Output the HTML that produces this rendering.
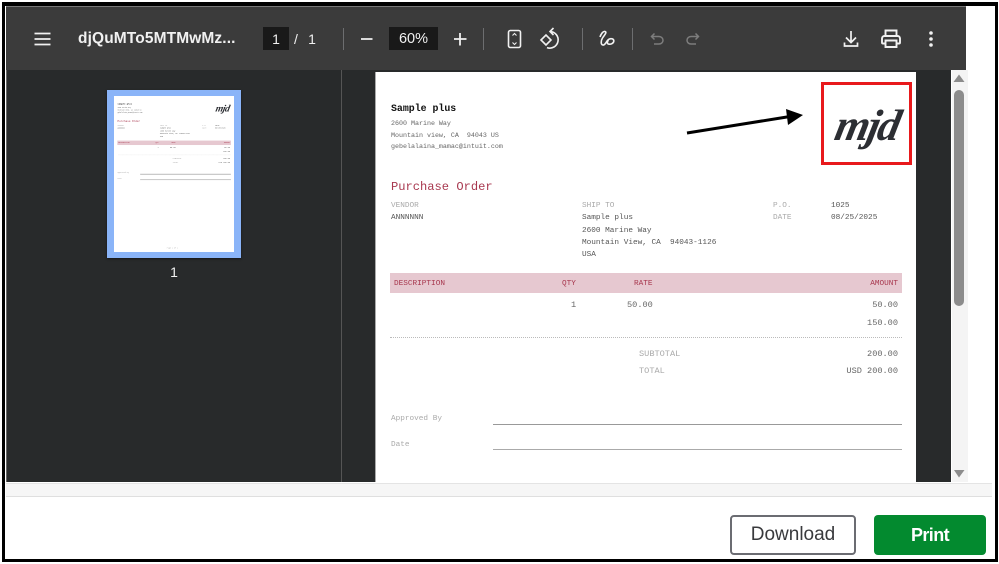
<!DOCTYPE html>
<html><head><meta charset="utf-8">
<style>
html,body{margin:0;padding:0;width:999px;height:564px;overflow:hidden;background:#fff}
*{box-sizing:border-box}
.a{position:absolute}
#root{position:relative;width:999px;height:564px;background:#fff;overflow:hidden}
.ui{font-family:"Liberation Sans",sans-serif;color:#f1f1f1;line-height:20px;text-align:center}
.sep{position:absolute;width:1px;top:28px;height:22px;background:#6d6e70}
.doc{position:absolute;width:541px;background:#fff;overflow:hidden;font-family:"Liberation Mono",monospace;color:#555}
.doc div{position:absolute;white-space:pre;line-height:10px}
.s{font-size:6.67px;color:#666;margin-top:1px}
.m{font-size:7.73px;color:#555;margin-top:1px}
.g{font-size:7.73px;color:#aaa;margin-top:1px}
.h{font-size:7.73px;color:#a8384f;margin-top:1px}
.n{font-size:8.6px;color:#666;margin-top:1px}
.t{margin-top:1px}
.r{text-align:right}
svg{position:absolute;overflow:visible}
</style></head><body>
<div id="root">
  <!-- viewer -->
  <div class="a" style="left:6px;top:6px;width:960px;height:476px;background:#282a2b"></div>
  <div class="a" style="left:6px;top:6px;width:960px;height:64px;background:#3b3b3b;border-top:1px solid #777"></div>
  <div class="a" style="left:6px;top:70px;width:1px;height:412px;background:#666"></div>
  <div class="a" style="left:341px;top:70px;width:1px;height:412px;background:#555"></div>

  <!-- toolbar -->
  <svg style="left:0;top:0" width="999" height="70" fill="none" stroke="#f1f1f1" stroke-width="1.7">
    <path d="M34.500 33.500h16M34.500 39h16M34.500 44.500h16"/>
    <path d="M361 39h11.500M454 39h12.500M460 33v12.500" stroke-width="1.8"/>
    <!-- fit -->
    <rect x="508.500" y="30.500" width="12" height="17" rx="1.800" stroke-width="1.600"/>
    <path d="M512.500 35.500l2-2 2 2M512.500 42.500l2 2 2-2" stroke-width="1.100"/>
    <!-- rotate -->
    <path d="M541 40l5-5 5 5-5 5z" stroke-width="1.600"/>
    <path d="M550 31.500a8.300 8.300 0 1 1-3 16.100M553.500 28l-3.500 3.500 3.500 3.500" stroke-width="1.600"/>
    <!-- ink -->
    <path d="M600 37c1-3 3-6 5-5.500 2.500.7-1 4-2.500 6.500-1.500 2.500-2 6.500.3 7 2.700.5 3.500-4.500 6.200-5.800 2.500-1.200 5-.2 4.800 2-.2 2.300-3.500 3.500-5.500 2.800-1.500-.6-1-2.500.2-4" stroke-width="1.600"/>
    <!-- undo redo -->
    <path d="M654.500 33.500l-3 3 3 3M652 36.500h7c2.300 0 4 1.700 4 3.800s-1.700 3.700-4 3.700h-5" stroke="#7d7d7d" stroke-width="1.500"/>
    <path d="M695.500 33.500l3 3-3 3M698 36.500h-7c-2.300 0-4 1.700-4 3.800s1.700 3.700 4 3.700h5" stroke="#7d7d7d" stroke-width="1.500"/>
    <!-- download -->
    <path d="M851 31v11.500M846 37.500l5 5 5-5M844.500 42.500v3.500h13v-3.500" stroke-width="1.700"/>
    <!-- print -->
    <path d="M885.500 36v-5.500h11V36M885.500 43.500h-2.500a1 1 0 0 1-1-1v-4a2.500 2.500 0 0 1 2.500-2.500h13a2.500 2.500 0 0 1 2.500 2.500v4a1 1 0 0 1-1 1h-2.500" stroke-width="1.900"/>
    <path d="M885.500 40.500h11v6.500h-11z" stroke-width="1.900"/>
    <g fill="#f1f1f1" stroke="none"><circle cx="931" cy="33" r="1.800"/><circle cx="931" cy="39" r="1.800"/><circle cx="931" cy="45" r="1.800"/></g>
  </svg>
  <div class="a ui" style="left:78px;top:29px;width:160px;text-align:left;font-size:15.5px;font-weight:700;white-space:nowrap;letter-spacing:.12px">djQuMTo5MTMwMz...</div>
  <div class="a" style="left:263px;top:27px;width:26px;height:23px;background:#191919"></div>
  <div class="a ui" style="left:263px;top:29px;width:26px;font-size:14px">1</div>
  <div class="a ui" style="left:286px;top:29px;width:20px;font-size:14px">/</div>
  <div class="a ui" style="left:302px;top:29px;width:20px;font-size:14px">1</div>
  <div class="sep" style="left:343px"></div>
  <div class="a" style="left:389px;top:27px;width:49px;height:23px;background:#191919"></div>
  <div class="a ui" style="left:389px;top:29px;width:49px;font-size:14.5px">60%</div>
  <div class="sep" style="left:483px"></div>
  <div class="sep" style="left:582px"></div>
  <div class="sep" style="left:632px"></div>

  <!-- thumbnail -->
  <div class="a" style="left:107px;top:90px;width:134px;height:168px;background:#8ab4f8;box-shadow:0 1px 2px rgba(0,0,0,.5)"></div>
  <div class="a" style="left:114px;top:96px;width:120px;height:156px;overflow:hidden;background:#fff">
    <div style="position:absolute;left:0;top:0;width:541px;height:703px;transform:scale(.2218);transform-origin:0 0;filter:blur(.8px)">
      <div class="doc" style="left:0;top:0;height:703px">
        <div class="t" style="left:16px;top:31px;font-size:9.9px;font-weight:700;color:#111">Sample plus</div>
        <div class="s" style="left:16px;top:46px">2600 Marine Way</div>
        <div class="s" style="left:16px;top:58px">Mountain view, CA  94043 US</div>
        <div class="s" style="left:16px;top:69px">gebelalaina_mamac@intuit.com</div>
        <div class="t" style="left:16px;top:109px;font-size:12.1px;color:#a8384f">Purchase Order</div>
        <div class="g" style="left:16px;top:128px">VENDOR</div>
        <div class="m" style="left:16px;top:140px">ANNNNNN</div>
        <div class="g" style="left:207px;top:128px">SHIP TO</div>
        <div class="m" style="left:207px;top:140px">Sample plus</div>
        <div class="m" style="left:207px;top:153px">2600 Marine Way</div>
        <div class="m" style="left:207px;top:165px">Mountain View, CA  94043-1126</div>
        <div class="m" style="left:207px;top:177px">USA</div>
        <div class="g" style="left:398px;top:128px">P.O.</div>
        <div class="m" style="left:456px;top:128px">1025</div>
        <div class="g" style="left:398px;top:140px">DATE</div>
        <div class="m" style="left:456px;top:140px">08/25/2025</div>
        <div style="left:15px;top:201px;width:512px;height:20px;background:#e6c8d0"></div>
        <div class="h" style="left:19px;top:206px">DESCRIPTION</div>
        <div class="h" style="left:187px;top:206px">QTY</div>
        <div class="h" style="left:259px;top:206px">RATE</div>
        <div class="h r" style="left:463px;top:206px;width:60px">AMOUNT</div>
        <div class="n" style="left:196px;top:227px">1</div>
        <div class="n" style="left:252px;top:227px">50.00</div>
        <div class="n r" style="left:463px;top:227px;width:60px">50.00</div>
        <div class="n r" style="left:463px;top:245px;width:60px">150.00</div>
        <div style="left:15px;top:265px;width:512px;height:0;border-top:1px dotted #bbb"></div>
        <div class="g" style="left:264px;top:276px;font-size:8.6px">SUBTOTAL</div>
        <div class="g" style="left:264px;top:293px;font-size:8.6px">TOTAL</div>
        <div class="n r" style="left:443px;top:276px;width:80px">200.00</div>
        <div class="n r" style="left:423px;top:293px;width:100px">USD 200.00</div>
        <div class="g" style="left:16px;top:341px">Approved By</div>
        <div class="g" style="left:16px;top:367px">Date</div>
        <div style="left:118px;top:351px;width:409px;height:3px;background:#999"></div>
        <div style="left:118px;top:376px;width:409px;height:3px;background:#aaa"></div>
        <div style="left:459px;top:33px;font-family:'Liberation Serif',serif;font-style:italic;font-weight:700;font-size:44px;line-height:44px;color:#2c2e33;letter-spacing:-2px;transform:skewX(-12deg)">mjd</div>
        <div class="g" style="left:238px;top:680px">Page 1 of 1</div>
      </div>
    </div>
  </div>
  <div class="a ui" style="left:164px;top:262px;width:20px;font-size:14px">1</div>

  <!-- main page -->
  <div class="a" style="left:375px;top:72px;width:541px;height:410px;overflow:hidden;border-left:1px solid #aaa;background:#fff">
    <div class="doc" style="left:-1px;top:0;height:410px">
      <div class="t" style="left:16px;top:31px;font-size:9.9px;font-weight:700;color:#111">Sample plus</div>
      <div class="s" style="left:16px;top:46px">2600 Marine Way</div>
      <div class="s" style="left:16px;top:58px">Mountain view, CA  94043 US</div>
      <div class="s" style="left:16px;top:69px">gebelalaina_mamac@intuit.com</div>
      <div class="t" style="left:16px;top:109px;font-size:12.1px;color:#a8384f">Purchase Order</div>
      <div class="g" style="left:16px;top:128px">VENDOR</div>
      <div class="m" style="left:16px;top:140px">ANNNNNN</div>
      <div class="g" style="left:207px;top:128px">SHIP TO</div>
      <div class="m" style="left:207px;top:140px">Sample plus</div>
      <div class="m" style="left:207px;top:153px">2600 Marine Way</div>
      <div class="m" style="left:207px;top:165px">Mountain View, CA  94043-1126</div>
      <div class="m" style="left:207px;top:177px">USA</div>
      <div class="g" style="left:398px;top:128px">P.O.</div>
      <div class="m" style="left:456px;top:128px">1025</div>
      <div class="g" style="left:398px;top:140px">DATE</div>
      <div class="m" style="left:456px;top:140px">08/25/2025</div>
      <div style="left:15px;top:201px;width:512px;height:20px;background:#e6c8d0"></div>
      <div class="h" style="left:19px;top:206px">DESCRIPTION</div>
      <div class="h" style="left:187px;top:206px">QTY</div>
      <div class="h" style="left:259px;top:206px">RATE</div>
      <div class="h r" style="left:463px;top:206px;width:60px">AMOUNT</div>
      <div class="n" style="left:196px;top:227px">1</div>
      <div class="n" style="left:252px;top:227px">50.00</div>
      <div class="n r" style="left:463px;top:227px;width:60px">50.00</div>
      <div class="n r" style="left:463px;top:245px;width:60px">150.00</div>
      <div style="left:15px;top:265px;width:512px;height:0;border-top:1px dotted #bbb"></div>
      <div class="g" style="left:264px;top:276px;font-size:8.6px">SUBTOTAL</div>
      <div class="g" style="left:264px;top:293px;font-size:8.6px">TOTAL</div>
      <div class="n r" style="left:443px;top:276px;width:80px">200.00</div>
      <div class="n r" style="left:423px;top:293px;width:100px">USD 200.00</div>
      <div class="g" style="left:16px;top:341px">Approved By</div>
      <div class="g" style="left:16px;top:367px">Date</div>
      <div style="left:118px;top:352px;width:409px;height:1px;background:#999"></div>
      <div style="left:118px;top:377px;width:409px;height:1px;background:#aaa"></div>
    </div>
  </div>

  <!-- logo -->
  <div class="a" style="left:821px;top:82px;width:91px;height:83px;border:3px solid #e8191c"></div>
  <div class="a" style="left:836px;top:104px;font-family:'Liberation Serif',serif;font-style:italic;font-weight:700;font-size:44px;line-height:44px;color:#2c2e33;letter-spacing:-2px;transform:skewX(-12deg);white-space:pre">mjd</div>

  <!-- arrow -->
  <svg style="left:0;top:0" width="999" height="564">
    <path d="M687 133L790 116.500" stroke="#000" stroke-width="3" fill="none"/>
    <path d="M786 109L803 115L788 125z" fill="#000"/>
  </svg>

  <!-- scrollbar -->
  <div class="a" style="left:951px;top:70px;width:17px;height:412px;background:#f4f4f4;border-left:1px solid #fff"></div>
  <div class="a" style="left:954px;top:90px;width:10px;height:216px;background:#8c8c8c;border-radius:5px"></div>
  <svg style="left:0;top:0" width="999" height="564">
    <path d="M959 74.500L964.500 82H953.500z" fill="#8c8c8c"/>
    <path d="M954 470H964.500L959 477.500z" fill="#8c8c8c"/>
  </svg>

  <!-- bottom strip -->
  <div class="a" style="left:6px;top:483px;width:986px;height:14px;background:#f6f6f6;border-top:1px solid #e4e4e4;border-bottom:1px solid #dfdfdf"></div>

  <!-- buttons -->
  <div class="a" style="left:730px;top:515px;width:126px;height:40px;border:2px solid #6b6c72;border-radius:4px;background:#fff;font-family:'Liberation Sans',sans-serif;font-size:19px;line-height:36px;text-align:center;color:#393a3d">Download</div>
  <div class="a" style="left:874px;top:515px;width:112px;height:40px;border-radius:4px;background:#038a2f;font-family:'Liberation Sans',sans-serif;font-weight:700;font-size:18px;line-height:40px;text-align:center;color:#fff;letter-spacing:-.6px">Print</div>

  <!-- outer frame -->
  <div class="a" style="left:2px;top:2px;width:996px;height:560px;border:3px solid #000;border-top-width:4px;pointer-events:none"></div>
</div>
</body></html>
